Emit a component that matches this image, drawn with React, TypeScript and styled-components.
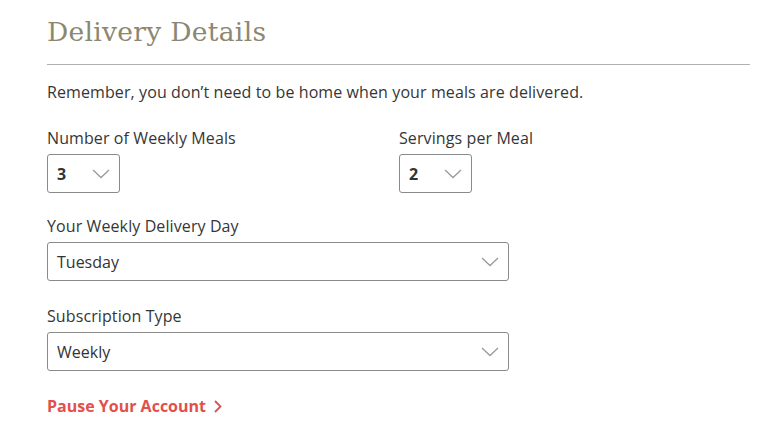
import React from 'react';
import styled, { createGlobalStyle } from 'styled-components';

const GlobalStyle = createGlobalStyle`
    body {
        margin: 0;
        background: #ffffff;
        font-family: "Open Sans", Lato, sans-serif;
        color: #363636;
    }
`;

const Page = styled.div`
    padding: 12px 26px 0 47px;
    width: 703px;
`;

const Title = styled.h2`
    margin: 0;
    font-family: "DejaVu Serif", "Liberation Serif", serif;
    font-weight: normal;
    font-size: 26.5px;
    line-height: 40px;
    color: #8b8872;
    letter-spacing: 0.3px;
`;

const Divider = styled.hr`
    margin: 12px 0 0;
    border: 0;
    border-top: 1px solid #b0b0b0;
`;

const Intro = styled.p`
    margin: 15px 0 0;
    font-size: 16px;
    line-height: 24px;
    letter-spacing: 0.1px;
`;

const Row = styled.div`
    display: flex;
    margin-top: 22px;
`;

const Field = styled.div<{ $width?: number; $gap?: number }>`
    display: flex;
    flex-direction: column;
    width: ${(p) => (p.$width ? `${p.$width}px` : 'auto')};
    margin-top: ${(p) => p.$gap ?? 0}px;
`;

const Label = styled.label`
    font-size: 16px;
    line-height: 24px;
    letter-spacing: 0.1px;
    margin-bottom: 4px;
`;

const Select = styled.div<{ $width: number; $bold?: boolean }>`
    box-sizing: border-box;
    width: ${(p) => p.$width}px;
    height: 39px;
    border: 1px solid #8a8a8a;
    border-radius: 3px;
    display: flex;
    align-items: center;
    justify-content: space-between;
    padding: 0 9px 0 9px;
    font-size: 16px;
    font-weight: ${(p) => (p.$bold ? 700 : 400)};
    color: #333333;
`;

const Chevron = () => (
    <svg width="18" height="10" viewBox="0 0 18 10" fill="none">
        <path d="M1 1l8 7.5L17 1" stroke="#9a9a9a" strokeWidth="1.3" />
    </svg>
);

const PauseLink = styled.a`
    display: inline-flex;
    align-items: center;
    gap: 8px;
    margin-top: 24px;
    font-size: 16px;
    font-weight: 700;
    color: #e2504c;
    text-decoration: none;
    cursor: pointer;
`;

export default function App() {
    return (
        <>
            <GlobalStyle />
            <Page>
                <Title>Delivery Details</Title>
                <Divider />
                <Intro>Remember, you don’t need to be home when your meals are delivered.</Intro>
                <Row>
                    <Field $width={352}>
                        <Label>Number of Weekly Meals</Label>
                        <Select $width={73} $bold>
                            3
                            <Chevron />
                        </Select>
                    </Field>
                    <Field $width={200}>
                        <Label>Servings per Meal</Label>
                        <Select $width={73} $bold>
                            2
                            <Chevron />
                        </Select>
                    </Field>
                </Row>
                <Field $gap={21}>
                    <Label>Your Weekly Delivery Day</Label>
                    <Select $width={462}>
                        Tuesday
                        <Chevron />
                    </Select>
                </Field>
                <Field $gap={23}>
                    <Label>Subscription Type</Label>
                    <Select $width={462}>
                        Weekly
                        <Chevron />
                    </Select>
                </Field>
                <PauseLink>
                    Pause Your Account
                    <svg width="8" height="13" viewBox="0 0 8 13" fill="none">
                        <path d="M1 1l5.5 5.5L1 12" stroke="#e2504c" strokeWidth="1.8" />
                    </svg>
                </PauseLink>
            </Page>
        </>
    );
}
